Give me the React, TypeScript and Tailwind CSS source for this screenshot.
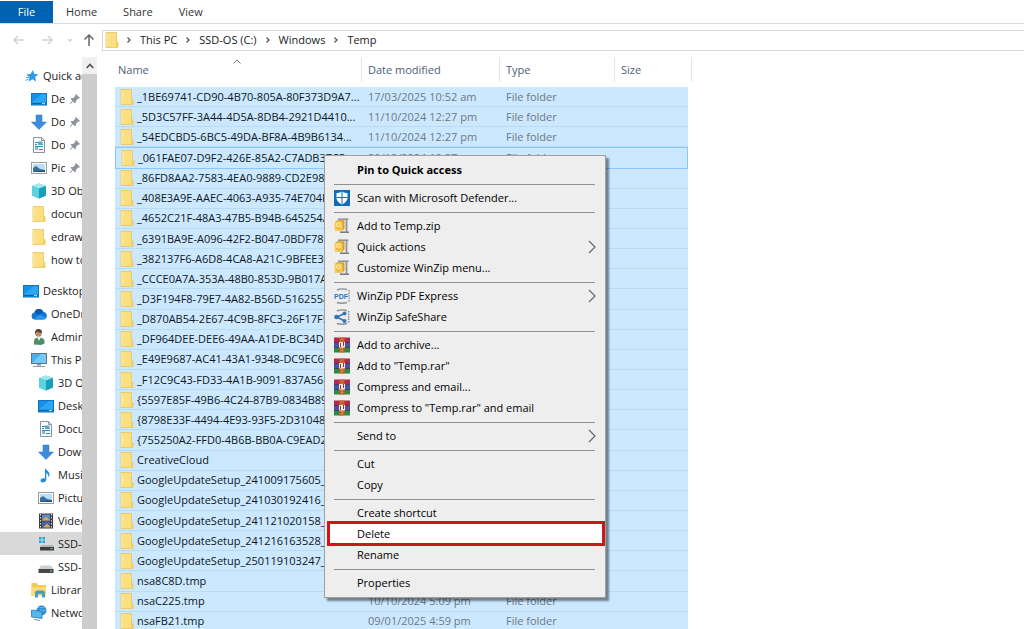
import type { ReactNode } from "react";
import { clsx } from "clsx";

type IconName =
  | "star"
  | "desktop"
  | "download"
  | "document"
  | "picture"
  | "cube"
  | "folder"
  | "cloud"
  | "user"
  | "pc"
  | "music"
  | "video"
  | "osdrive"
  | "drive"
  | "library"
  | "network"
  | "defender"
  | "winzip"
  | "pdf"
  | "share"
  | "winrar";

const icons: Record<IconName, ReactNode> = {
  star: (
    <>
      <path d="M10 2l1.300 4 4 .3-3.100 2.700.9 4.500-3.600-2.200-4 2.200 1-4.300L3.300 6.500l4.200-.4z" fill="#2f9be8" />
      <path d="M3 9.500h3M2.500 12.500l3-1.500" stroke="#4aa9ec" />
    </>
  ),
  desktop: (
    <>
      <rect x="0.500" y="2.500" width="15" height="11.500" fill="#1590e8" stroke="#1273b9" />
      <path d="M1 11.500L11 3h4v8.500z" fill="#2ba6f7" />
      <path d="M1 12.500h14" stroke="#0c64a8" />
      <path d="M11 12.500h3" stroke="#a9d8f8" />
    </>
  ),
  download: <path d="M5 1h6v7h4.500L8 15.500.5 8H5z" fill="#3a8ddb" stroke="#2d79c3" strokeWidth="0.500" />,
  document: (
    <>
      <path d="M2.500.5h8l3 3v12h-11z" fill="#f8fbfd" stroke="#8a969e" />
      <path d="M10.500.5v3h3" fill="none" stroke="#8a969e" />
      <path d="M4 5.500h4M4 7.500h2M9 7.500h3M4 9.500h8M4 12.500h2M8 12.500h4" stroke="#3787ac" />
      <rect x="7" y="4.500" width="4.500" height="3.500" fill="#5ba9c9" />
      <rect x="4" y="10" width="3" height="3" fill="#7fb9d3" />
    </>
  ),
  picture: (
    <>
      <rect x="0.500" y="2.500" width="15" height="11" fill="#fdfdfd" stroke="#9b9b9b" />
      <rect x="2" y="4" width="12" height="8" fill="#b9dff7" />
      <path d="M2 8l3-2 4 3 5 1v2H2z" fill="#39719d" />
      <path d="M2 12l5-1 7-.5V12z" fill="#234c6d" />
    </>
  ),
  cube: (
    <>
      <path d="M8 .5l7 2.500v9.500L8 15.500l-7-3V3z" fill="#3fc2d4" />
      <path d="M8 .5l7 2.500-7 2.500L1 3z" fill="#a4e8ef" />
      <path d="M8 5.500L15 3v9.500l-7 3z" fill="#1a9fb9" />
      <path d="M1 3l7 2.500v10l-7-3z" fill="#5bd2df" />
    </>
  ),
  folder: (
    <>
      <path d="M2 .5h10.500v9l1.500 1v5H2z" fill="#fbdf80" stroke="#e9c45c" strokeWidth="0.800" />
      <path d="M12 9.500l2 1v5h-2z" fill="#f3cd5c" />
      <path d="M3 1.500v13" stroke="#fdeeb4" />
    </>
  ),
  cloud: (
    <>
      <path d="M4 13.500a3.600 3.600 0 0 1-.6-7.100 4.800 4.800 0 0 1 9-.4 3.800 3.800 0 0 1 .4 7.500z" fill="#1377d2" />
      <path d="M3.400 6.400a4.800 4.800 0 0 1 9-.4L8 9z" fill="#0a58b0" />
      <path d="M3 13.200L9 8.500l6 3.500-2 1.500H4z" fill="#2797ec" />
    </>
  ),
  user: (
    <>
      <path d="M3 15.500v-3c0-3 2-4 5-4s5.500 1 5.500 4v2L10 16z" fill="#4f8e63" />
      <path d="M6 8l2 4 2-4z" fill="#e5efe5" />
      <circle cx="7.500" cy="4.500" r="3.300" fill="#b98c6c" />
      <path d="M4 5c-.5-3 1-5 3.500-5S11.300 1.500 11 4C9 4 7 3 6 2.500z" fill="#594338" />
    </>
  ),
  pc: (
    <>
      <rect x="0.500" y="1.500" width="15" height="10" fill="#45b0f1" stroke="#5e7480" />
      <path d="M1 11L10 2h5v9z" fill="#75c9f8" />
      <path d="M6 12h4v1.500H6z" fill="#85939b" />
      <path d="M2 14.500h12" stroke="#8a9aa3" />
    </>
  ),
  music: (
    <path
      d="M7 .5c.5 3 5 3.500 4.500 7.500-.3 1.300-.8 1.800-1.200 2.300.3-2.600-.8-3.700-2-4.300v6.500C8 16 2.500 16.500 2.500 13.500c0-2 2.500-2.800 4.500-2z"
      fill="#1e8fdb"
    />
  ),
  video: (
    <>
      <rect x="1" y="0.500" width="14" height="15" fill="#3e3e42" />
      <path d="M2.500 1v14M13.500 1v14" stroke="#d7d7d7" strokeDasharray="1.500 1.500" />
      <rect x="4" y="1.500" width="8" height="6" fill="#5f86c9" />
      <rect x="4" y="8.500" width="8" height="6" fill="#3f67a8" />
      <path d="M4 7.500l4-4 4 4zM5 14.500l4-4 3 3v1z" fill="#d1a95d" />
    </>
  ),
  osdrive: (
    <>
      <path d="M1 1h2.500v2.500H1zM4.500 1H7v2.500H4.500zM1 4.500h2.500V7H1zM4.500 4.500H7V7H4.500z" fill="#1aa9dd" />
      <path d="M3.500 9h11l1.500 2H2z" fill="#b5b5b5" />
      <rect x="2" y="11" width="14" height="3.500" fill="#3c3f42" />
      <path d="M12.500 12.700h2" stroke="#7bdc8a" />
    </>
  ),
  drive: (
    <>
      <path d="M3 6.500h10l2.500 3.500H.5z" fill="#d0d0d0" />
      <rect x="0.500" y="10" width="15" height="4" fill="#45484b" />
      <path d="M12 12h2" stroke="#8cd99a" />
    </>
  ),
  library: (
    <>
      <path d="M.5 1h5l1.500 2h8v11H.5z" fill="#f6c851" />
      <path d="M.5 5h14.500v9H.5z" fill="#fbd974" />
      <path d="M4 15.500v-5.500l1.500-1.500h7L14 10v5.500h-3V12H7v3.500z" fill="#4a9bce" />
    </>
  ),
  network: (
    <>
      <circle cx="10.500" cy="5.500" r="5" fill="#2e8fd2" />
      <path d="M7 2c2 1 4 1 7 0M9 5c2 1 4 1 6 0" stroke="#6bbbe8" fill="none" />
      <path d="M.5 5l10.500 1.500v7L.5 12z" fill="#55b7ed" stroke="#2f78ab" strokeWidth="0.800" />
      <path d="M3 14.500l6 1" stroke="#7893a3" />
    </>
  ),
  defender: (
    <>
      <rect width="16" height="16" fill="#0f6cbd" />
      <path
        d="M8 1.500c2 1.300 3.800 1.500 5.500 1.500v4.500c0 3.400-2.500 5.700-5.500 7-3-1.300-5.500-3.600-5.500-7V3C4.200 3 6 2.800 8 1.500z"
        fill="#fff"
      />
      <path d="M8 1.500v13M2.500 7.500h11" stroke="#0f6cbd" />
    </>
  ),
  winzip: (
    <>
      <path d="M4 1.200h10.500" stroke="#8b8f94" strokeWidth="1.500" />
      <path d="M6 14.200h9" stroke="#72767a" strokeWidth="1.500" />
      <path d="M12.500 1v13" stroke="#8f9499" strokeWidth="1.800" />
      <path d="M1 4l2-1.800h7.500v8.300L8.500 12.500H1z" fill="#d9a02c" />
      <rect x="0.500" y="3.500" width="8" height="9" rx="2" fill="#fbcb50" />
      <circle cx="4.500" cy="7" r="2" stroke="#fdeaae" fill="none" />
      <path d="M2.500 9.500l2 1.500 2-1.500" stroke="#d79a27" fill="none" />
    </>
  ),
  pdf: (
    <>
      <path d="M3 2c3-1.500 6-1.500 10-.5M3 14.500c3 1 6 1 10 0" stroke="#8a8f94" fill="none" strokeWidth="1.400" />
      <path d="M15 2v12" stroke="#8a8f94" strokeWidth="1.400" strokeDasharray="1.500 1" />
      <text x="0" y="11" fontSize="7" fontWeight="700" fontFamily="Liberation Sans, sans-serif" fill="#2d76bb">
        PDF
      </text>
    </>
  ),
  share: (
    <>
      <path d="M3 2c3-1.500 6-1.500 10-.5M3 14.500c3 1 6 1 10 0" stroke="#8a8f94" fill="none" strokeWidth="1.400" />
      <path d="M14.700 2v12" stroke="#8a8f94" strokeWidth="1.600" strokeDasharray="1.500 1" />
      <path d="M10.500 4.500L3 8l7.500 4" stroke="#2d76bb" strokeWidth="1.600" fill="none" />
      <circle cx="2.500" cy="8" r="2.300" fill="#2d76bb" />
      <circle cx="10.500" cy="4.500" r="2" fill="#2d76bb" />
      <circle cx="10.500" cy="12" r="2" fill="#2d76bb" />
    </>
  ),
  winrar: (
    <>
      <rect y="0.500" width="16" height="5" fill="#b02a50" />
      <rect y="5.500" width="16" height="5" fill="#4653ad" />
      <rect y="10.500" width="16" height="5" fill="#2c8a45" />
      <path d="M0 5.500h16M0 10.500h16" stroke="#3a2331" strokeWidth="0.700" />
      <rect x="5.500" y="0.500" width="5" height="15" fill="#d0622b" />
      <rect x="5" y="5" width="6" height="5.500" fill="#f3e7df" />
      <path d="M6.500 6v4M9.500 5v4" stroke="#8c3b2c" />
      <path d="M8 11v4.500" stroke="#e8c15d" strokeDasharray="1 1" />
    </>
  ),
};

function Icon({ name }: { name: IconName }) {
  return (
    <svg viewBox="0 0 16 16" className="size-4 shrink-0" fill="none" aria-hidden="true">
      {icons[name]}
    </svg>
  );
}

function Pin() {
  return (
    <svg viewBox="0 0 12 12" className="size-3 shrink-0" aria-hidden="true">
      <path
        d="M7 1l4 4-1 .8-.8-.2L7 7.700l-.2 2L6 10.300 3.800 8.200 1.500 11l-.6-.5L3.200 7.600 1.500 5.800l.8-.8 2-.1 2.200-2.300L6.200 1.800z"
        fill="#8b949c"
      />
    </svg>
  );
}

interface NavItem {
  label: string;
  icon: IconName;
  level: 0 | 1 | 2;
  pinned?: boolean;
  selected?: boolean;
}

const quickAccess: NavItem[] = [
  { label: "Quick access", icon: "star", level: 0 },
  { label: "Desktop", icon: "desktop", level: 1, pinned: true },
  { label: "Downloads", icon: "download", level: 1, pinned: true },
  { label: "Documents", icon: "document", level: 1, pinned: true },
  { label: "Pictures", icon: "picture", level: 1, pinned: true },
  { label: "3D Objects", icon: "cube", level: 1 },
  { label: "documents", icon: "folder", level: 1 },
  { label: "edraw", icon: "folder", level: 1 },
  { label: "how to", icon: "folder", level: 1 },
];

const desktopTree: NavItem[] = [
  { label: "Desktop", icon: "desktop", level: 0 },
  { label: "OneDrive", icon: "cloud", level: 1 },
  { label: "Admin", icon: "user", level: 1 },
  { label: "This PC", icon: "pc", level: 1 },
  { label: "3D Objects", icon: "cube", level: 2 },
  { label: "Desktop", icon: "desktop", level: 2 },
  { label: "Documents", icon: "document", level: 2 },
  { label: "Downloads", icon: "download", level: 2 },
  { label: "Music", icon: "music", level: 2 },
  { label: "Pictures", icon: "picture", level: 2 },
  { label: "Videos", icon: "video", level: 2 },
  { label: "SSD-OS (C:)", icon: "osdrive", level: 2, selected: true },
  { label: "SSD-", icon: "drive", level: 2 },
  { label: "Libraries", icon: "library", level: 1 },
  { label: "Network", icon: "network", level: 1 },
];

interface FileRow {
  name: string;
  date?: string;
  type?: string;
  focused?: boolean;
}

const files: FileRow[] = [
  { name: "_1BE69741-CD90-4B70-805A-80F373D9A7...", date: "17/03/2025 10:52 am", type: "File folder" },
  { name: "_5D3C57FF-3A44-4D5A-8DB4-2921D4410...", date: "11/10/2024 12:27 pm", type: "File folder" },
  { name: "_54EDCBD5-6BC5-49DA-BF8A-4B9B6134...", date: "11/10/2024 12:27 pm", type: "File folder" },
  { name: "_061FAE07-D9F2-426E-85A2-C7ADB37C5", date: "20/12/2024 10:37", type: "File folder", focused: true },
  { name: "_86FD8AA2-7583-4EA0-9889-CD2E98" },
  { name: "_408E3A9E-AAEC-4063-A935-74E704F" },
  { name: "_4652C21F-48A3-47B5-B94B-645254A" },
  { name: "_6391BA9E-A096-42F2-B047-0BDF78F" },
  { name: "_382137F6-A6D8-4CA8-A21C-9BFEE3" },
  { name: "_CCCE0A7A-353A-48B0-853D-9B017A" },
  { name: "_D3F194F8-79E7-4A82-B56D-5162558" },
  { name: "_D870AB54-2E67-4C9B-8FC3-26F17F5" },
  { name: "_DF964DEE-DEE6-49AA-A1DE-BC34D" },
  { name: "_E49E9687-AC41-43A1-9348-DC9EC6" },
  { name: "_F12C9C43-FD33-4A1B-9091-837A566" },
  { name: "{5597E85F-49B6-4C24-87B9-0834B890" },
  { name: "{8798E33F-4494-4E93-93F5-2D310480" },
  { name: "{755250A2-FFD0-4B6B-BB0A-C9EAD2" },
  { name: "CreativeCloud" },
  { name: "GoogleUpdateSetup_241009175605_1" },
  { name: "GoogleUpdateSetup_241030192416_1" },
  { name: "GoogleUpdateSetup_241121020158_1" },
  { name: "GoogleUpdateSetup_241216163528_1" },
  { name: "GoogleUpdateSetup_250119103247_2" },
  { name: "nsa8C8D.tmp" },
  { name: "nsaC225.tmp", date: "10/10/2024 5:09 pm", type: "File folder" },
  { name: "nsaFB21.tmp", date: "09/01/2025 4:59 pm", type: "File folder" },
];

interface MenuEntry {
  label: string;
  icon?: IconName;
  submenu?: boolean;
  bold?: boolean;
  marked?: boolean;
}

const menuGroups: MenuEntry[][] = [
  [{ label: "Pin to Quick access", bold: true }],
  [{ label: "Scan with Microsoft Defender...", icon: "defender" }],
  [
    { label: "Add to Temp.zip", icon: "winzip" },
    { label: "Quick actions", icon: "winzip", submenu: true },
    { label: "Customize WinZip menu...", icon: "winzip" },
  ],
  [
    { label: "WinZip PDF Express", icon: "pdf", submenu: true },
    { label: "WinZip SafeShare", icon: "share" },
  ],
  [
    { label: "Add to archive...", icon: "winrar" },
    { label: 'Add to "Temp.rar"', icon: "winrar" },
    { label: "Compress and email...", icon: "winrar" },
    { label: 'Compress to "Temp.rar" and email', icon: "winrar" },
  ],
  [{ label: "Send to", submenu: true }],
  [{ label: "Cut" }, { label: "Copy" }],
  [{ label: "Create shortcut" }, { label: "Delete", marked: true }, { label: "Rename" }],
  [{ label: "Properties" }],
];

function RibbonTabs() {
  return (
    <div className="flex h-6 border-b border-[#dcdcdc] pt-px text-[#333]">
      <button className="w-[53px] bg-[#0063b1] text-white">File</button>
      {["Home", "Share", "View"].map((tab) => (
        <button key={tab} className="px-[13px]">
          {tab}
        </button>
      ))}
    </div>
  );
}

function Arrow({ d, label, className }: { d: string; label: string; className: string }) {
  return (
    <button aria-label={label} className={className}>
      <svg viewBox="0 0 14 14" className="size-3.5" fill="none" stroke="currentColor" strokeWidth="1.500">
        <path d={d} />
      </svg>
    </button>
  );
}

function AddressBar() {
  return (
    <div className="flex h-8 items-center pt-1 pb-1">
      <div className="flex w-[102px] shrink-0 items-center pl-3">
        <Arrow label="Back" d="M12 7H2M6 3L2 7l4 4" className="w-7 text-[#d3d3d3]" />
        <Arrow label="Forward" d="M2 7h10M8 3l4 4-4 4" className="w-[23px] text-[#d3d3d3]" />
        <Arrow label="Recent locations" d="M5 6l2 2 2-2" className="w-[19px] text-[#d3d3d3]" />
        <Arrow label="Up" d="M7 13V2M2.500 6.500L7 2l4.500 4.500" className="text-[#666]" />
      </div>
      <nav className="flex h-[21px] flex-1 items-center border border-r-0 border-[#d9d9d9] pl-px text-[#1a1a1a]">
        <Icon name="folder" />
        {["This PC", "SSD-OS (C:)", "Windows", "Temp"].map((part) => (
          <div key={part} className="flex items-center">
            <svg viewBox="0 0 6 8" className="mx-1.5 h-2 w-1.5" fill="none" stroke="#555" strokeWidth="1.300">
              <path d="M1.500 1.500L4 4 1.500 6.500" />
            </svg>
            <button className="px-0.5">{part}</button>
          </div>
        ))}
      </nav>
    </div>
  );
}

function NavRow({ item }: { item: NavItem }) {
  return (
    <li>
      <button
        className={clsx(
          "flex h-[23px] w-full items-center gap-1 overflow-hidden whitespace-nowrap",
          item.level === 0 && "pl-[23px]",
          item.level === 1 && "pl-[31px]",
          item.level === 2 && "pl-[38px]",
          item.selected && "bg-[#d9d9d9]"
        )}
      >
        <Icon name={item.icon} />
        <span className={clsx("text-left", item.pinned && "w-3.5 shrink-0 overflow-hidden")}>{item.label}</span>
        {item.pinned && <Pin />}
      </button>
    </li>
  );
}

function Sidebar() {
  return (
    <aside className="flex w-[101px] shrink-0">
      <div className="w-[82px] overflow-hidden pt-[7px]">
        <ul>
          {quickAccess.map((item) => (
            <NavRow key={item.label} item={item} />
          ))}
        </ul>
        <ul className="mt-2">
          {desktopTree.map((item) => (
            <NavRow key={`${item.level}-${item.label}`} item={item} />
          ))}
        </ul>
      </div>
      <div className="flex w-[15px] flex-col bg-[#cdcdcd]">
        <button aria-label="Scroll up" className="flex h-[17px] items-center justify-center bg-[#f0f0f0]">
          <svg viewBox="0 0 8 6" className="h-1.5 w-2" fill="none" stroke="#505050" strokeWidth="1.600">
            <path d="M.7 5L4 1.500 7.300 5" />
          </svg>
        </button>
      </div>
    </aside>
  );
}

function FileTable() {
  return (
    <table className="h-[575px] w-[577px] shrink-0 table-fixed border-separate border-spacing-0 text-left">
      <colgroup>
        <col className="w-[247px]" />
        <col className="w-[138px]" />
        <col className="w-[115px]" />
        <col className="w-[73px]" />
        <col className="w-1" />
      </colgroup>
      <thead className="text-[#4c607a]">
        <tr>
          <th className="relative h-[25px] border-r border-[#e5e5e5] pl-[3px] font-normal">
            <svg viewBox="0 0 8 5" className="absolute top-0.5 left-[118px] h-[5px] w-2" fill="none" stroke="#777">
              <path d="M.5 4.500L4 1l3.500 3.500" />
            </svg>
            <button>Name</button>
          </th>
          <th className="border-r border-[#e5e5e5] pl-1.5 font-normal">
            <button>Date modified</button>
          </th>
          <th className="border-r border-[#e5e5e5] pl-1.5 font-normal">
            <button>Type</button>
          </th>
          <th colSpan={2} className="border-r border-[#e5e5e5] pl-1.5 font-normal">
            <button>Size</button>
          </th>
        </tr>
        <tr>
          <td colSpan={5} className="h-[5px]" />
        </tr>
      </thead>
      <tbody className="text-[#6d7882]">
        {files.map((file) => {
          const cell = clsx(
            "border-b bg-[#cce8ff] pl-1.5 whitespace-nowrap",
            file.focused ? "border-t border-[#8cc8f5]" : "border-[#b9dcf6]"
          );
          return (
            <tr key={file.name}>
              <td className={clsx(cell, file.focused && "border-l")}>
                <div className="-ml-0.5 flex h-[18px] items-center gap-0.5 overflow-hidden text-[#0d1620]">
                  <Icon name="folder" />
                  {file.name}
                </div>
              </td>
              <td className={cell}>{file.date}</td>
              <td className={cell}>{file.type}</td>
              <td className={clsx(cell, file.focused && "border-r")} />
            </tr>
          );
        })}
      </tbody>
    </table>
  );
}

function ContextMenu() {
  return (
    <div
      role="menu"
      className="absolute top-[155px] left-[324px] w-[282px] border border-[#a0a0a0] bg-[#eeeeee] pt-[3px] pr-0.5 pb-1 pl-0.5 text-black shadow-[3px_3px_2px_rgba(0,0,0,0.45)]"
    >
      {menuGroups.map((group, index) => (
        <div key={index} className="flex flex-col">
          {index > 0 && <hr className="mt-1 mr-2 mb-0.5 ml-[7px] border-t border-[#919191]" />}
          {group.map((entry) => (
            <button
              key={entry.label}
              role="menuitem"
              className={clsx(
                "flex h-[21px] items-center gap-[7px] pr-[3px] text-left",
                entry.bold && "font-bold",
                entry.marked
                  ? "ml-0.5 bg-white pl-[5px] outline-3 -outline-offset-1 outline-[#cf1519]"
                  : "pl-[7px]"
              )}
            >
              {entry.icon ? <Icon name={entry.icon} /> : <span className="w-4" />}
              <span className="flex-1">{entry.label}</span>
              {entry.submenu && (
                <svg viewBox="0 0 8 14" className="mr-1 h-3.5 w-2" fill="none" stroke="#666" strokeWidth="1.200">
                  <path d="M1 1l6 6-6 6" />
                </svg>
              )}
            </button>
          ))}
        </div>
      ))}
    </div>
  );
}

export default function App() {
  return (
    <div className="relative flex h-screen flex-col overflow-hidden bg-white font-['Open_Sans','Noto_Sans',sans-serif] text-[11px] leading-4 text-[#1a1a1a]">
      <RibbonTabs />
      <AddressBar />
      <main className="flex min-h-0 flex-1 pt-px">
        <Sidebar />
        <div className="flex-1 overflow-hidden pl-3.5">
          <FileTable />
        </div>
      </main>
      <ContextMenu />
    </div>
  );
}
